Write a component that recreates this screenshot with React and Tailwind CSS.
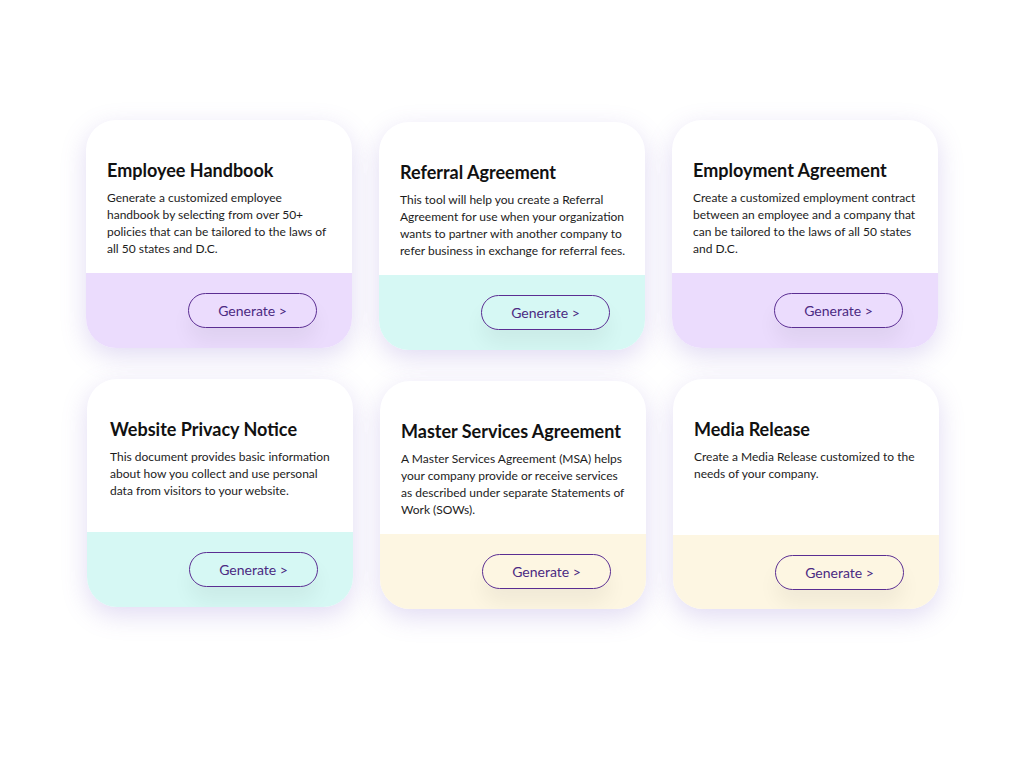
import React from "react";

const cards = [
  {
    title: "Employee Handbook",
    lines: [
      "Generate a customized employee",
      "handbook by selecting from over 50+",
      "policies that can be tailored to the laws of",
      "all 50 states and D.C.",
    ],
    band: "bg-[#ebdcfd]",
    off: "",
    pad: "pl-[21px]",
    h: "h-[228px]",
    top: "h-[153px]",
  },
  {
    title: "Referral Agreement",
    lines: [
      "This tool will help you create a Referral",
      "Agreement for use when your organization",
      "wants to partner with another company to",
      "refer business in exchange for referral fees.",
    ],
    band: "bg-[#d6f8f4]",
    off: "mt-[2px]",
    pad: "pl-[21px]",
    h: "h-[228px]",
    top: "h-[153px]",
  },
  {
    title: "Employment Agreement",
    lines: [
      "Create a customized employment contract",
      "between an employee and a company that",
      "can be tailored to the laws of all 50 states",
      "and D.C.",
    ],
    band: "bg-[#ebdcfd]",
    off: "",
    pad: "pl-[21px]",
    h: "h-[228px]",
    top: "h-[153px]",
  },
  {
    title: "Website Privacy Notice",
    lines: [
      "This document provides basic information",
      "about how you collect and use personal",
      "data from visitors to your website.",
    ],
    band: "bg-[#d6f8f4]",
    off: "ml-[1px]",
    pad: "pl-[23px]",
    h: "h-[228px]",
    top: "h-[153px]",
  },
  {
    title: "Master Services Agreement",
    lines: [
      "A Master Services Agreement (MSA) helps",
      "your company provide or receive services",
      "as described under separate Statements of",
      "Work (SOWs).",
    ],
    band: "bg-[#fdf6e2]",
    off: "ml-[1px] mt-[2px]",
    pad: "pl-[21px]",
    h: "h-[228px]",
    top: "h-[153px]",
  },
  {
    title: "Media Release",
    lines: [
      "Create a Media Release customized to the",
      "needs of your company.",
    ],
    band: "bg-[#fdf6e2]",
    off: "ml-[1px]",
    pad: "pl-[21px] pt-[37px]",
    h: "h-[230px]",
    top: "h-[156px]",
  },
];

function Card({ c }) {
  return (
    <div
      className={`${c.off} w-[266px] ${c.h} rounded-[30px] overflow-hidden bg-white flex flex-col shadow-[0_8px_26px_rgba(120,90,200,0.22)]`}
    >
      <div className={`${c.top} pt-[38px] ${c.pad} pr-3`}>
        <h2 className="text-[18px] leading-[24px] font-bold text-[#111] whitespace-nowrap">
          {c.title}
        </h2>
        <p className="mt-[7px] text-[12px] leading-[17px] text-[#1c1c1c] whitespace-nowrap">
          {c.lines.map((l, i) => (
            <span key={i} className="block">
              {l}
            </span>
          ))}
        </p>
      </div>
      <div className={`flex-1 ${c.band} flex justify-end items-start pt-[20px] pr-[35px]`}>
        <button className="w-[129px] h-[35px] rounded-full border border-[#5b2e92] text-[14px] text-[#4b2a82] flex items-center justify-center shadow-[0_14px_20px_rgba(0,0,0,0.05)]">
          Generate &gt;
        </button>
      </div>
    </div>
  );
}

export default function App() {
  return (
    <div
      className="w-[1024px] h-[768px] bg-white pt-[120px] pl-[86px]"
      style={{ fontFamily: "Lato, 'Noto Sans', sans-serif" }}
    >
      <div className="grid grid-cols-[266px_266px_266px] gap-x-[27px] gap-y-[29px] items-start">
        {cards.map((c, i) => (
          <Card key={i} c={c} />
        ))}
      </div>
    </div>
  );
}
